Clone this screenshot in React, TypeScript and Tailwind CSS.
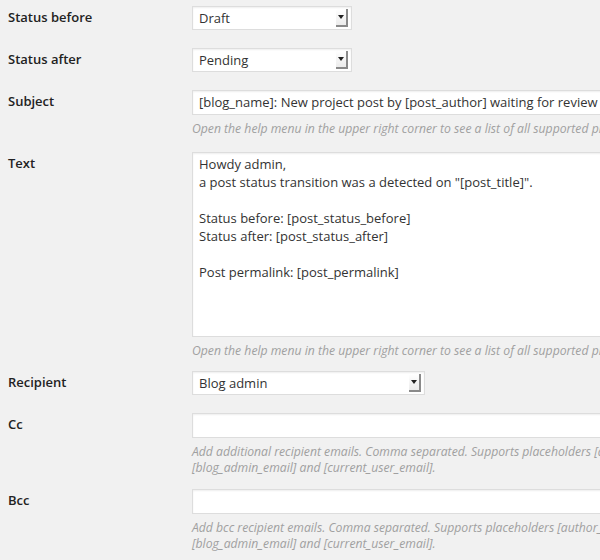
import * as React from "react";

const font = { fontFamily: '"Open Sans", "Noto Sans", sans-serif' };

const Label = ({ children }: { children: React.ReactNode }) => (
  <div className="w-[192px] shrink-0 pl-2 pt-[1px] text-[13px] leading-[20px] font-semibold text-[#222]">
    {children}
  </div>
);

const Help = ({ lines }: { lines: string[] }) => (
  <div className="mt-[6px] text-[12.2px] leading-[15.5px] italic text-[#a0a0a0]">
    {lines.map((l, i) => (
      <div key={i} className="whitespace-nowrap">
        {l}
      </div>
    ))}
  </div>
);

const FakeSelect = ({ value, width }: { value: string; width: string }) => (
  <div
    className={`relative h-[24px] ${width} bg-white border border-[#ddd] shadow-[inset_0_1px_2px_rgba(0,0,0,0.07)] pl-[6px] text-[13px] leading-[22px] text-[#333]`}
  >
    {value}
    <span className="absolute right-[3px] top-[2px] bottom-[2px] w-[12px] flex items-center justify-center border-r-2 border-b-2 border-[#8a8a8a] bg-gradient-to-b from-white to-[#ececec]">
      <svg width="6" height="4" viewBox="0 0 6 4">
        <path d="M0 0h6L3 4z" fill="#222" />
      </svg>
    </span>
  </div>
);

const TextInput = ({ value = "" }: { value?: string }) => (
  <div className="h-[25px] w-[460px] bg-white border border-[#ddd] shadow-[inset_0_1px_2px_rgba(0,0,0,0.07)] pl-[6px] text-[13px] leading-[23px] text-[#333] whitespace-nowrap">
    {value}
  </div>
);

const bodyLines = [
  "Howdy admin,",
  'a post status transition was a detected on "[post_title]".',
  "",
  "Status before: [post_status_before]",
  "Status after: [post_status_after]",
  "",
  "Post permalink: [post_permalink]",
];

const helpMenu = [
  "Open the help menu in the upper right corner to see a list of all supported placeholders.",
];

export default function App() {
  return (
    <div
      className="w-[600px] h-[560px] overflow-hidden bg-[#f1f1f1]"
      style={font}
    >
      <div className="flex flex-col pt-[6px]">
        <div className="flex">
          <Label>Status before</Label>
          <FakeSelect value="Draft" width="w-[160px]" />
        </div>

        <div className="flex mt-[18px]">
          <Label>Status after</Label>
          <FakeSelect value="Pending" width="w-[160px]" />
        </div>

        <div className="flex mt-[18px]">
          <Label>Subject</Label>
          <div>
            <TextInput value="[blog_name]: New project post by [post_author] waiting for review" />
            <Help lines={helpMenu} />
          </div>
        </div>

        <div className="flex mt-[15px]">
          <Label>Text</Label>
          <div>
            <div className="h-[185px] w-[460px] bg-white border border-[#ddd] shadow-[inset_0_1px_2px_rgba(0,0,0,0.07)] pl-[6px] pt-[2px] text-[13px] leading-[18px] text-[#333]">
              {bodyLines.map((l, i) => (
                <div key={i} className="h-[18px] whitespace-nowrap">
                  {l}
                </div>
              ))}
            </div>
            <Help lines={helpMenu} />
          </div>
        </div>

        <div className="flex mt-[13px]">
          <Label>Recipient</Label>
          <FakeSelect value="Blog admin" width="w-[233px]" />
        </div>

        <div className="flex mt-[18px]">
          <Label>Cc</Label>
          <div>
            <TextInput />
            <Help
              lines={[
                "Add additional recipient emails. Comma separated. Supports placeholders [author_email], [post_author_email],",
                "[blog_admin_email] and [current_user_email].",
              ]}
            />
          </div>
        </div>

        <div className="flex mt-[14px]">
          <Label>Bcc</Label>
          <div>
            <TextInput />
            <Help
              lines={[
                "Add bcc recipient emails. Comma separated. Supports placeholders [author_email], [post_author_email],",
                "[blog_admin_email] and [current_user_email].",
              ]}
            />
          </div>
        </div>
      </div>
    </div>
  );
}
